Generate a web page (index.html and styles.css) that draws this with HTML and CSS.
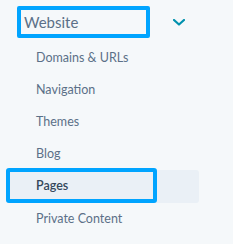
FILE: index.html
```html
<!DOCTYPE html>
<html>
<head>
<meta charset="utf-8">
<link rel="stylesheet" href="styles.css">
</head>
<body>
<div class="sidebar">
  <div class="section-head">
    <div class="section-title">Website</div>
    <svg class="chevron" width="12" height="7" viewBox="0 0 12 7"><path d="M1 1 L6 5.5 L11 1" fill="none" stroke="#0091ae" stroke-width="2.2" stroke-linecap="round" stroke-linejoin="round"/></svg>
  </div>
  <ul class="nav">
    <li class="nav-item">Domains &amp; URLs</li>
    <li class="nav-item">Navigation</li>
    <li class="nav-item">Themes</li>
    <li class="nav-item">Blog</li>
    <li class="nav-item active">Pages<span class="highlight"></span></li>
    <li class="nav-item">Private Content</li>
  </ul>
</div>
</body>
</html>
```
FILE: styles.css
```css
html, body {
  margin: 0;
  padding: 0;
  background: #f5f8fa;
}
body {
  font-family: Lato, "Noto Sans", sans-serif;
  width: 233px;
  height: 244px;
  overflow: hidden;
}
.sidebar {
  padding-top: 6px;
}
.section-head {
  display: flex;
  align-items: center;
  height: 32px;
  padding-left: 17px;
}
.section-title {
  box-sizing: border-box;
  width: 133px;
  height: 32px;
  border: 4px solid #00a4ff;
  border-radius: 2px;
  padding-left: 3px;
  font-size: 15px;
  line-height: 24px;
  color: #5b7088;
}
.chevron {
  margin-left: 23px;
}
.nav {
  list-style: none;
  margin: 4px 0 0 0;
  padding: 0;
}
.nav-item {
  position: relative;
  margin-left: 6px;
  width: 193px;
  height: 32px;
  box-sizing: border-box;
  padding-left: 30px;
  font-size: 12.5px;
  line-height: 32px;
  color: #5b7088;
  border-radius: 3px;
}
.nav-item.active {
  background: #eaf0f6;
  color: #33475b;
  font-weight: 600;
  height: 33px;
}
.highlight {
  position: absolute;
  left: 0;
  top: -2px;
  width: 151px;
  height: 35px;
  box-sizing: border-box;
  border: 4px solid #00a4ff;
  border-radius: 3px;
}
```
